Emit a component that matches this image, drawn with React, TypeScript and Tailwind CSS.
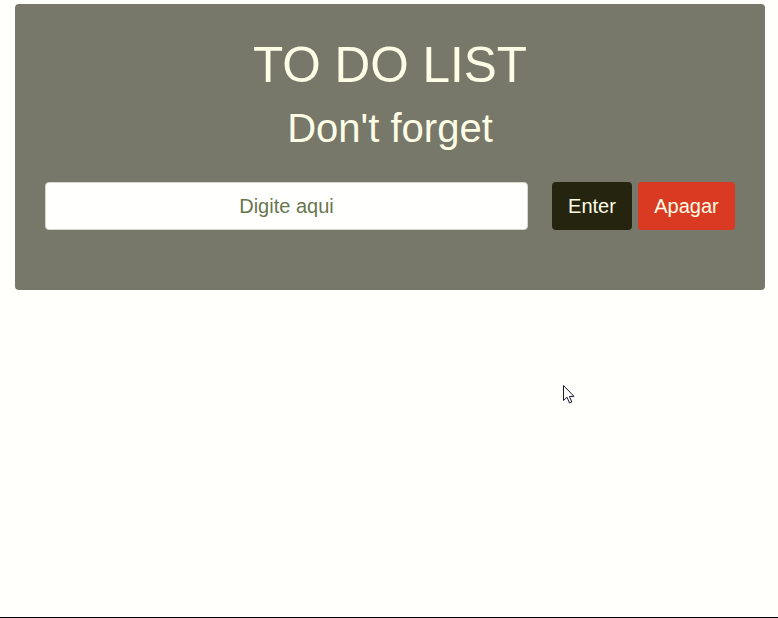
import React from "react";

export default function App() {
  return (
    <div
      className="relative h-[618px] w-[778px] overflow-hidden border-b border-black bg-[#fffffb]"
      style={{ fontFamily: '"Liberation Sans", Arial, sans-serif' }}
    >
      <div className="ml-[15px] mt-[4px] w-[750px] rounded-[4px] bg-[#77786a] px-[30px] pb-[60px] pt-[31px] text-center text-[#fdfde6]">
        <div className="h-[60px] text-[49.5px] leading-[60px]">TO DO LIST</div>
        <div className="mt-[9px] h-[48px] text-[40px] leading-[48px]">Don't forget</div>
        <div className="mt-[30px] flex h-[48px] items-stretch">
          <input
            type="text"
            placeholder="Digite aqui"
            className="h-[48px] w-[483px] rounded-[4px] border border-[#d6d8cc] bg-[#fffffd] px-4 text-center text-[20px] text-[#495057] outline-none placeholder:text-[#68764f]"
          />
          <button className="ml-[24px] h-[48px] w-[80px] rounded-[4px] bg-[#25240f] text-[20px] text-[#fdfde6]">
            Enter
          </button>
          <button className="ml-[6px] h-[48px] w-[97px] rounded-[4px] bg-[#d93a21] text-[20px] text-[#fdfde6]">
            Apagar
          </button>
        </div>
      </div>
      <svg
        className="absolute left-[563px] top-[385px]"
        width="13"
        height="20"
        viewBox="0 0 13 20"
      >
        <path
          d="M0.5 0.5 L0.5 15.5 L4 12.2 L6.5 18 L8.8 17 L6.4 11.4 L11 11.4 Z"
          fill="white"
          stroke="#1a1a2e"
          strokeWidth="1"
          strokeLinejoin="round"
        />
      </svg>
    </div>
  );
}
